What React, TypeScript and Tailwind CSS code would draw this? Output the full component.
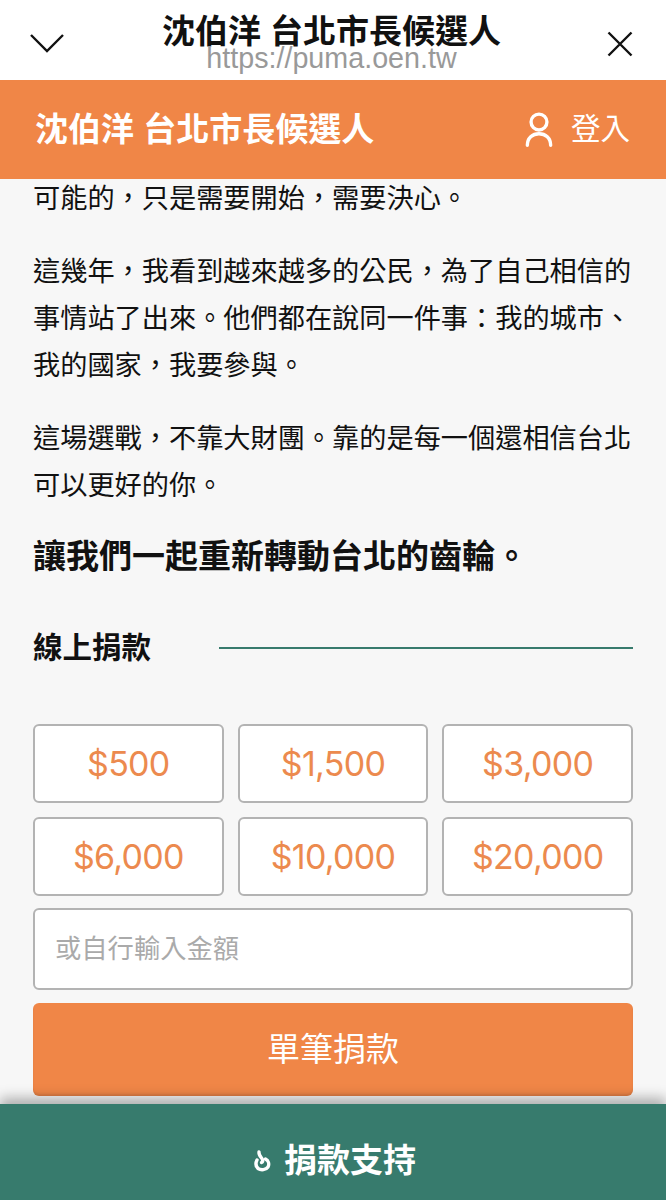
const amounts = ["$500", "$1,500", "$3,000", "$6,000", "$10,000", "$20,000"];

// full-width punctuation, the CJK font centres it like the reference
const intro = "可能的\uFF0C只是需要開始\uFF0C需要決心。";
const para1 = "這幾年\uFF0C我看到越來越多的公民\uFF0C為了自己相信的事情站了出來。他們都在說同一件事\uFF1A我的城市、我的國家\uFF0C我要參與。";
const para2 = "這場選戰\uFF0C不靠大財團。靠的是每一個還相信台北可以更好的你。";

const UserIcon = () => (
  <svg width="28" height="37" viewBox="0 0 30 38" fill="none" stroke="white" strokeWidth="3.6" strokeLinecap="round">
    <circle cx="15" cy="11" r="8.5" />
    <path d="M2.5 36 C2.5 28 8 23.5 15 23.5 C22 23.5 27.5 28 27.5 36" />
  </svg>
);

const FireIcon = () => (
  <svg width="17" height="22" viewBox="0 0 17 22" fill="none" stroke="white" strokeWidth="3.4" strokeLinecap="round">
    <path d="M5 2 C4.5 5 7 7 8.5 9.5 C9 11 8.5 12 7.5 12.5" />
    <path d="M3 10 C1.5 13 2 16.5 4 18.5 C7 20.5 12 20 14 17 C15.5 14 14.5 10.5 11.5 9" />
  </svg>
);

export default function App() {
  return (
    <div className="flex h-[1200px] flex-col overflow-hidden bg-[#f7f7f7] font-['Liberation_Sans','Noto_Sans_CJK_TC',sans-serif]">
      {/* browser bar */}
      <div className="relative z-10 grid h-[80px] shrink-0 grid-cols-[1fr_auto_1fr] bg-white pl-[30px] pr-[33px]">
        <svg width="34" height="20" viewBox="0 0 34 20" fill="none" stroke="#111" strokeWidth="2.4" className="mt-[33px]">
          <path d="M1 2 L17 18 L33 2" />
        </svg>
        <div className="flex flex-col items-center pt-[18px]">
          <div className="text-[33px] font-bold leading-[28px] text-[#111]">沈伯洋 台北市長候選人</div>
          <div className="text-[28.7px] leading-[24px] text-[#999]">https://puma.oen.tw</div>
        </div>
        <svg width="26" height="26" viewBox="0 0 26 26" fill="none" stroke="#111" strokeWidth="2.4" className="mt-[31px] justify-self-end">
          <path d="M1.5 1.5 L24.5 24.5 M24.5 1.5 L1.5 24.5" />
        </svg>
      </div>

      {/* site header */}
      <div className="relative z-10 flex h-[99px] shrink-0 items-center justify-between bg-[#f08647] pl-[35px] pr-[36px] text-white">
        <div className="text-[33px] font-bold">沈伯洋 台北市長候選人</div>
        <div className="flex items-center gap-[18px]">
          <UserIcon />
          <span className="text-[29.5px]">登入</span>
        </div>
      </div>

      {/* content */}
      <div className="-mt-[4px] min-h-0 flex-1 px-[33px] text-[27.2px] leading-[47px] text-[#111]">
        <p>{intro}</p>
        <p className="mt-[26px]">{para1}</p>
        <p className="mt-[26px]">{para2}</p>
        <p className="mt-[24px] text-[33px] font-bold">讓我們一起重新轉動台北的齒輪。</p>

        <div className="mt-[44px] flex items-center justify-between">
          <h2 className="text-[29.5px] font-bold">線上捐款</h2>
          <div className="h-[2px] w-[414px] bg-[#377b6d]" />
        </div>

        <div className="mt-[53px] grid grid-cols-3 gap-[14px]">
          {amounts.map((a) => (
            <div
              key={a}
              className="flex h-[79px] items-center justify-center rounded-[6px] border-2 border-[#b3b3b3] bg-white font-['Inter'] text-[34px] tracking-[-0.7px] text-[#ec8a4e]"
            >
              {a}
            </div>
          ))}
        </div>

        <div className="mt-[12px] flex h-[82px] items-center rounded-[6px] border-2 border-[#b3b3b3] bg-white pl-[20px] text-[26.3px] text-[#aaa]">
          或自行輸入金額
        </div>

        <div className="mt-[13px] flex h-[93px] items-center justify-center rounded-[6px] bg-[#f08647] text-[33px] text-white shadow-[inset_0_-2px_2px_rgba(0,0,0,0.08)]">
          單筆捐款
        </div>
      </div>

      {/* donate bar */}
      <div className="relative flex h-[96px] shrink-0 items-center justify-center gap-[13px] bg-[#377b6d] pl-[4px] pt-[18px] text-white shadow-[0_-6px_12px_rgba(0,0,0,0.3)]">
        <FireIcon />
        <span className="text-[33px] font-bold">捐款支持</span>
      </div>
    </div>
  );
}
